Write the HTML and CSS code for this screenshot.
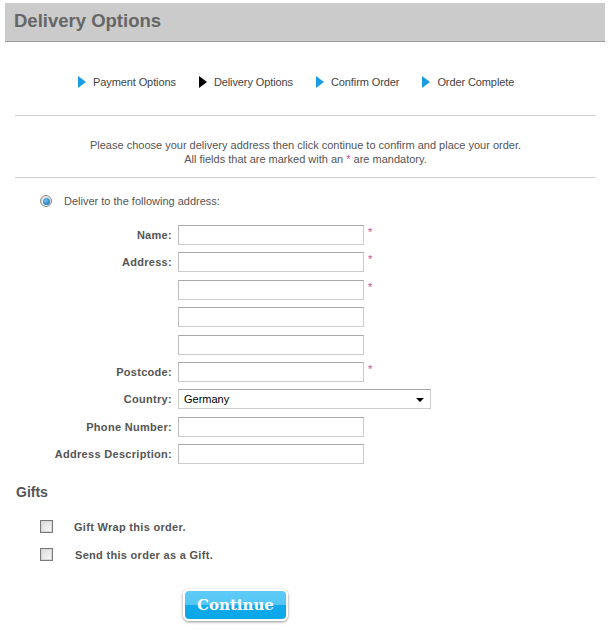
FILE: index.html
```html
<!DOCTYPE html>
<html>
<head>
<meta charset="utf-8">
<link rel="stylesheet" href="styles.css">
</head>
<body>
<div class="header"><h1 class="title">Delivery Options</h1></div>

<ul class="steps">
  <li class="step"><span class="tri"></span>Payment Options</li>
  <li class="step"><span class="tri tri-current"></span>Delivery Options</li>
  <li class="step"><span class="tri"></span>Confirm Order</li>
  <li class="step"><span class="tri"></span>Order Complete</li>
</ul>

<div class="rule"></div>
<p class="intro">Please choose your delivery address then click continue to confirm and place your order.<br>All fields that are marked with an <span class="star">*</span> are mandatory.</p>
<div class="rule rule-2"></div>

<div class="deliver"><span class="radio"><span class="radio-dot"></span></span>Deliver to the following address:</div>

<div class="form">
  <label class="lbl">Name:</label><div class="field"></div><span class="star req">*</span>
  <label class="lbl">Address:</label><div class="field"></div><span class="star req">*</span>
  <span class="lbl"></span><div class="field"></div><span class="star req">*</span>
  <span class="lbl"></span><div class="field"></div><span></span>
  <span class="lbl"></span><div class="field"></div><span></span>
  <label class="lbl">Postcode:</label><div class="field"></div><span class="star req">*</span>
  <label class="lbl">Country:</label><div class="select">Germany<span class="arrow"></span></div>
  <label class="lbl">Phone Number:</label><div class="field"></div><span></span>
  <label class="lbl">Address Description:</label><div class="field"></div><span></span>
</div>

<h2 class="gifts">Gifts</h2>
<div class="gift-row"><span class="check"></span><span class="gift-label">Gift Wrap this order.</span></div>
<div class="gift-row"><span class="check"></span><span class="gift-label gift-label-2">Send this order as a Gift.</span></div>

<div class="actions"><span class="btn">Continue</span></div>
</body>
</html>
```

FILE: styles.css
```css
* { box-sizing: border-box; }
body {
  margin: 0;
  width: 611px;
  height: 636px;
  overflow: hidden;
  background: #fff;
  font-family: "Liberation Sans", Arial, sans-serif;
  color: #555;
}
.header {
  margin: 3px 6px 0 5px;
  height: 39px;
  background: #cbcbcb;
  border-bottom: 1px solid #9a9a9a;
  display: flex;
  align-items: center;
  padding-left: 9px;
}
.title {
  margin: 0;
  font-size: 18.5px;
  font-weight: bold;
  color: #666;
  padding-bottom: 2px;
}
.steps {
  list-style: none;
  margin: 33px 0 0 78px;
  padding: 0;
  display: flex;
  height: 14px;
  align-items: center;
}
.step {
  display: flex;
  align-items: center;
  font-size: 11px;
  letter-spacing: -0.1px;
  color: #444;
  margin-right: 23px;
}
.tri {
  width: 0;
  height: 0;
  border-top: 6px solid transparent;
  border-bottom: 6px solid transparent;
  border-left: 8px solid #1a9be6;
  margin-right: 7px;
}
.tri-current { border-left-color: #000; }
.rule {
  margin: 26px 15px 0 15px;
  height: 1px;
  background: #cfcfcf;
}
.rule-2 { margin-top: 11px; }
.intro {
  margin: 22px 0 0 0;
  text-align: center;
  font-size: 11px;
  line-height: 14px;
  color: #555;
}
.star { color: #d0489a; }
.deliver {
  margin: 16px 0 0 40px;
  display: flex;
  align-items: center;
  font-size: 11px;
  color: #555;
  height: 14px;
}
.radio {
  width: 12px;
  height: 12px;
  border-radius: 50%;
  border: 1px solid #8a8a8a;
  background: #e6e6e6;
  display: flex;
  align-items: center;
  justify-content: center;
  margin-right: 12px;
}
.radio-dot {
  width: 7px;
  height: 7px;
  border-radius: 50%;
  background: radial-gradient(circle at 40% 35%, #6fc3f2, #0b5fa5);
}
.form {
  margin: 17px 0 0 0;
  display: grid;
  grid-template-columns: 172px 186px auto;
  column-gap: 6px;
  row-gap: 7.4px;
  align-items: center;
}
.lbl {
  text-align: right;
  font-size: 11px;
  font-weight: bold;
  letter-spacing: 0.3px;
  color: #555;
}
.field {
  height: 20px;
  border: 1px solid #cccccc;
  border-top-color: #a8a8a8;
  border-left-color: #bdbdbd;
  background: #fff;
}
.req {
  font-size: 11px;
  align-self: start;
  margin-top: 1px;
  margin-left: -2px;
}
.select {
  grid-column: 2 / span 2;
  width: 253px;
  height: 20px;
  border: 1px solid #cccccc;
  border-top-color: #a8a8a8;
  background: #fff;
  font-size: 11px;
  color: #000;
  padding-left: 5px;
  display: flex;
  align-items: center;
  position: relative;
}
.arrow {
  position: absolute;
  right: 6px;
  top: 8px;
  width: 0;
  height: 0;
  border-left: 4px solid transparent;
  border-right: 4px solid transparent;
  border-top: 4px solid #000;
}
.gifts {
  margin: 20px 0 0 16px;
  font-size: 14px;
  font-weight: bold;
  color: #555;
}
.gift-row {
  display: flex;
  align-items: center;
  margin: 20px 0 0 40px;
  height: 13px;
}
.gift-row + .gift-row { margin-top: 15px; }
.check {
  width: 13px;
  height: 13px;
  border: 1px solid #7a7a7a;
  box-shadow: inset 0 0 0 1px #d7d7d7;
  background: linear-gradient(135deg, #d9d9d9, #fafafa);
  margin-right: 21px;
}
.gift-label {
  font-size: 11px;
  font-weight: bold;
  letter-spacing: 0.3px;
  color: #555;
}
.gift-label-2 { margin-left: 1px; }
.actions {
  margin: 28px 0 0 183px;
}
.btn {
  display: inline-flex;
  align-items: center;
  justify-content: center;
  width: 105px;
  height: 32px;
  border: 2px solid #fff;
  border-radius: 6px;
  box-shadow: 0 1px 3px rgba(0, 0, 0, 0.45);
  background: linear-gradient(#5fcbf6 0%, #55c6f4 48%, #11a9ea 52%, #0aa7e8 100%);
  color: #fff;
  font-family: "DejaVu Serif", "Liberation Serif", serif;
  font-weight: bold;
  font-size: 15px;
  padding-bottom: 1px;
}
```
